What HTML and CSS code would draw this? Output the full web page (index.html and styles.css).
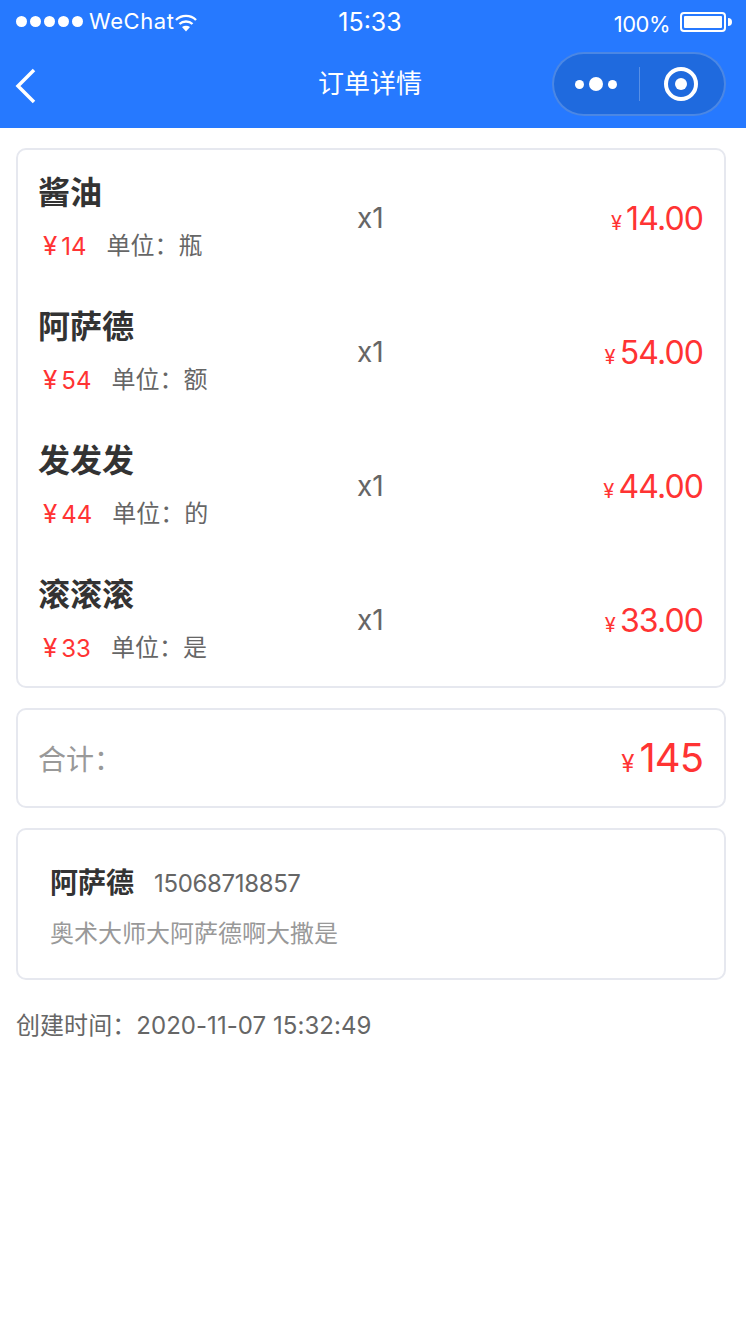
FILE: index.html
```html
<!DOCTYPE html>
<html lang="zh-CN">

<head>
    <meta charset="UTF-8">
    <meta name="viewport" content="width=device-width, initial-scale=1.0">
    <title>订单详情</title>
    <link rel="stylesheet" href="styles.css">
</head>

<body>
    <header class="top">
        <div class="status">
            <div class="status-left">
                <span class="dots"><i></i><i></i><i></i><i></i><i></i></span>
                <span class="carrier">WeChat</span>
                <svg class="wifi" width="22" height="18" viewBox="0 0 22 18">
                    <path d="M1 6 C6.5 0.500 15.500 0.500 21 6" fill="none" stroke="#fff" stroke-width="2.400" />
                    <path d="M4.500 10 C8 6.700 14 6.700 17.500 10" fill="none" stroke="#fff" stroke-width="2.400" />
                    <path d="M7 13 C9.500 11.200 12.500 11.200 15 13 L11 17.500 Z" fill="#fff" />
                </svg>
            </div>
            <div class="status-time">15:33</div>
            <div class="status-right">
                <span class="percent">100%</span>
                <span class="battery"><span class="battery-fill"></span></span>
                <span class="battery-tip"></span>
            </div>
        </div>
        <nav class="nav">
            <div class="nav-left">
                <svg width="24" height="36" viewBox="0 0 24 36">
                    <path d="M20 2 L4 18 L20 34" fill="none" stroke="#fff" stroke-width="3.500" />
                </svg>
            </div>
            <div class="nav-title">订单详情</div>
            <div class="nav-right">
                <div class="capsule">
                    <div class="capsule-more"><i></i><i class="big"></i><i></i></div>
                    <div class="capsule-line"></div>
                    <div class="capsule-close"><i></i></div>
                </div>
            </div>
        </nav>
    </header>

    <main class="content">
        <section class="card goods">
            <div class="goods-row">
                <div class="goods-info">
                    <div class="goods-name">酱油</div>
                    <div class="goods-sub"><span class="unit-price"><span class="yen">¥</span>14</span><span class="unit">单位：瓶</span></div>
                </div>
                <div class="goods-num">x1</div>
                <div class="goods-total"><span class="yen-small">¥</span>14.00</div>
            </div>
            <div class="goods-row">
                <div class="goods-info">
                    <div class="goods-name">阿萨德</div>
                    <div class="goods-sub"><span class="unit-price"><span class="yen">¥</span>54</span><span class="unit">单位：额</span></div>
                </div>
                <div class="goods-num">x1</div>
                <div class="goods-total"><span class="yen-small">¥</span>54.00</div>
            </div>
            <div class="goods-row">
                <div class="goods-info">
                    <div class="goods-name">发发发</div>
                    <div class="goods-sub"><span class="unit-price"><span class="yen">¥</span>44</span><span class="unit">单位：的</span></div>
                </div>
                <div class="goods-num">x1</div>
                <div class="goods-total"><span class="yen-small">¥</span>44.00</div>
            </div>
            <div class="goods-row">
                <div class="goods-info">
                    <div class="goods-name">滚滚滚</div>
                    <div class="goods-sub"><span class="unit-price"><span class="yen">¥</span>33</span><span class="unit">单位：是</span></div>
                </div>
                <div class="goods-num">x1</div>
                <div class="goods-total"><span class="yen-small">¥</span>33.00</div>
            </div>
        </section>

        <section class="card sum">
            <div class="sum-label">合计：</div>
            <div class="sum-value"><span class="sum-yen">¥</span>145</div>
        </section>

        <section class="card address">
            <div class="address-top">
                <span class="address-name">阿萨德</span>
                <span class="address-phone">15068718857</span>
            </div>
            <div class="address-detail">奥术大师大阿萨德啊大撒是</div>
        </section>

        <div class="created">创建时间：2020-11-07 15:32:49</div>
    </main>
</body>

</html>
```

FILE: styles.css
```css
* {
    box-sizing: border-box;
}

html,
body {
    margin: 0;
    padding: 0;
    background-color: #ffffff;
}

body {
    font-family: "Inter", "Noto Sans CJK SC", sans-serif;
    color: #333333;
}

/* 顶部状态栏和导航 */
.top {
    height: 128px;
    background-color: #2679ff;
    color: #ffffff;
}

.status {
    height: 40px;
    padding: 0 22px 0 16px;
    display: grid;
    grid-template-columns: 1fr auto 1fr;
    align-items: center;
}

.status-left {
    display: flex;
    align-items: center;
}

.dots {
    display: flex;
    gap: 3px;
    margin-right: 6px;
}

.dots i {
    width: 11px;
    height: 11px;
    border-radius: 50%;
    background-color: #ffffff;
}

.carrier {
    font-size: 22px;
    letter-spacing: 0.6px;
}

.wifi {
    margin-top: 3px;
}

.status-time {
    font-size: 25px;
    line-height: 40px;
    padding-top: 2px;
}

.status-right {
    display: flex;
    align-items: center;
    justify-content: flex-end;
    margin-right: -8px;
    padding-top: 2px;
}

.percent {
    font-size: 22px;
    letter-spacing: -0.5px;
    margin-right: 10px;
    padding-top: 3px;
}

.battery {
    width: 46px;
    height: 20px;
    border: 2px solid #ffffff;
    border-radius: 4px;
    padding: 2px;
    display: block;
}

.battery-fill {
    display: block;
    height: 100%;
    background-color: #ffffff;
    border-radius: 1px;
}

.battery-tip {
    width: 4px;
    height: 8px;
    margin-left: 2px;
    background-color: #ffffff;
    border-radius: 0 4px 4px 0;
}

.nav {
    height: 88px;
    display: grid;
    grid-template-columns: 1fr auto 1fr;
    align-items: center;
    padding: 0 20px 0 14px;
}

.nav-left {
    display: flex;
    align-items: center;
    padding-top: 4px;
}

.nav-title {
    font-size: 26px;
    line-height: 36px;
}

.nav-right {
    display: flex;
    justify-content: flex-end;
}

.capsule {
    width: 174px;
    height: 64px;
    border-radius: 32px;
    border: 2px solid rgba(255, 255, 255, 0.2);
    background-color: #1f6ade;
    display: flex;
    align-items: center;
}

.capsule-more {
    width: 85px;
    padding-right: 22px;
    display: flex;
    align-items: center;
    justify-content: flex-end;
    gap: 5px;
}

.capsule-more i {
    width: 9px;
    height: 9px;
    border-radius: 50%;
    background-color: #ffffff;
}

.capsule-more i.big {
    width: 14px;
    height: 14px;
}

.capsule-line {
    width: 1px;
    height: 34px;
    background-color: rgba(255, 255, 255, 0.25);
}

.capsule-close {
    flex: 1;
    padding-right: 2px;
    display: flex;
    justify-content: center;
    align-items: center;
}

.capsule-close i {
    width: 34px;
    height: 34px;
    border: 4px solid #ffffff;
    border-radius: 50%;
    position: relative;
    display: block;
}

.capsule-close i::after {
    content: "";
    position: absolute;
    left: 7px;
    top: 7px;
    width: 12px;
    height: 12px;
    border-radius: 50%;
    background-color: #ffffff;
}

/* 内容 */
.content {
    padding: 20px 20px 0 16px;
}

.card {
    border: 2px solid #e6e8ef;
    border-radius: 10px;
    margin-bottom: 20px;
}

.goods-row {
    height: 134px;
    padding: 0 20px;
    display: flex;
    align-items: center;
}

.goods-info {
    width: 319px;
    padding-top: 1px;
}

.goods-name {
    font-size: 32px;
    font-weight: 700;
    line-height: 44px;
    color: #333333;
}

.goods-sub {
    display: flex;
    align-items: center;
    margin-top: 13px;
    padding-left: 5px;
    font-size: 24px;
    line-height: 36px;
}

.unit-price {
    color: #ff3333;
    margin-right: 20px;
}

.yen {
    font-size: 26px;
    margin-right: 4px;
}

.unit {
    color: #666666;
}

.goods-num {
    font-size: 28px;
    color: #666666;
    padding-top: 2px;
}

.goods-total {
    flex: 1;
    text-align: right;
    font-size: 32px;
    letter-spacing: -0.9px;
    color: #ff3333;
    padding-top: 2px;
    padding-right: 1px;
}

.yen-small {
    font-size: 20px;
    margin-right: 5px;
}

.sum {
    height: 100px;
    padding: 0 20px;
    display: flex;
    align-items: center;
    justify-content: space-between;
}

.sum-label {
    font-size: 28px;
    color: #999999;
}

.sum-value {
    font-size: 40px;
    letter-spacing: -1px;
    color: #ff3333;
    padding-bottom: 2px;
    padding-right: 1px;
}

.sum-yen {
    font-size: 24px;
    margin-right: 6px;
}

.address {
    height: 152px;
    padding: 6px 32px 0;
    display: flex;
    flex-direction: column;
    justify-content: center;
}

.address-top {
    display: flex;
    align-items: center;
    line-height: 40px;
}

.address-name {
    font-size: 28px;
    font-weight: 700;
    margin-right: 20px;
}

.address-phone {
    font-size: 24px;
    letter-spacing: -0.35px;
    color: #666666;
    padding-top: 2px;
}

.address-detail {
    font-size: 24px;
    line-height: 36px;
    margin-top: 12px;
    color: #999999;
}

.created {
    font-size: 24px;
    letter-spacing: 0.05px;
    line-height: 36px;
    color: #666666;
    padding-top: 8px;
}
```
